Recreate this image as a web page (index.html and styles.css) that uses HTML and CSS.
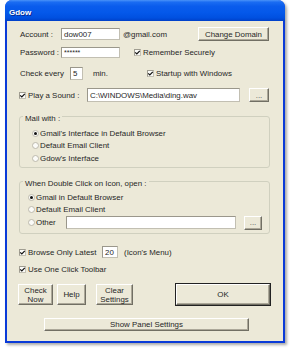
FILE: index.html
```html
<!DOCTYPE html>
<html>
<head>
<meta charset="utf-8">
<link rel="stylesheet" href="styles.css">
</head>
<body>
<div class="win">
  <div class="titlebar"><span class="title">Gdow</span></div>
  <div class="body">
    <div class="row r-account">
      <span class="lbl w42">Account :</span>
      <span class="field f-acc">dow007</span>
      <span class="txt at">@gmail.com</span>
      <span class="btn b-domain">Change Domain</span>
    </div>
    <div class="row r-pass">
      <span class="lbl w42">Password :</span>
      <span class="field f-pass">******</span>
      <span class="chk c-remember"><svg viewBox="0 0 7 7"><polyline points="1.2,3.4 2.8,5 5.8,1.8" /></svg></span>
      <span class="txt ct">Remember Securely</span>
    </div>
    <div class="row r-check">
      <span class="lbl w51">Check every</span>
      <span class="field f-min">5</span>
      <span class="txt min">min.</span>
      <span class="chk"><svg viewBox="0 0 7 7"><polyline points="1.2,3.4 2.8,5 5.8,1.8" /></svg></span>
      <span class="txt ct">Startup with Windows</span>
    </div>
    <div class="row r-sound">
      <span class="chk"><svg viewBox="0 0 7 7"><polyline points="1.2,3.4 2.8,5 5.8,1.8" /></svg></span>
      <span class="txt ct w59">Play a Sound :</span>
      <span class="field f-sound">C:\WINDOWS\Media\ding.wav</span>
      <span class="btn b-dots">...</span>
    </div>

    <div class="group g-mail">
      <span class="legend">Mail with :</span>
      <div class="opt o-mail"><span class="radio on"></span><span class="txt">Gmail's Interface in Default Browser</span></div>
      <div class="opt o-mail"><span class="radio"></span><span class="txt">Default Email Client</span></div>
      <div class="opt o-mail"><span class="radio"></span><span class="txt">Gdow's Interface</span></div>
    </div>

    <div class="group g-dbl">
      <span class="legend">When Double Click on Icon, open :</span>
      <div class="opt o-dbl"><span class="radio on"></span><span class="txt">Gmail in Default Browser</span></div>
      <div class="opt o-dbl"><span class="radio"></span><span class="txt">Default Email Client</span></div>
      <div class="opt o-dbl o-other"><span class="radio"></span><span class="txt w30">Other</span><span class="field f-other"></span><span class="btn b-dots2">...</span></div>
    </div>

    <div class="row r-browse">
      <span class="chk"><svg viewBox="0 0 7 7"><polyline points="1.2,3.4 2.8,5 5.8,1.8" /></svg></span>
      <span class="txt ct w74">Browse Only Latest</span>
      <span class="field f-latest">20</span>
      <span class="txt menu">(Icon's Menu)</span>
    </div>
    <div class="row r-toolbar">
      <span class="chk"><svg viewBox="0 0 7 7"><polyline points="1.2,3.4 2.8,5 5.8,1.8" /></svg></span>
      <span class="txt ct">Use One Click Toolbar</span>
    </div>

    <div class="row r-buttons">
      <span class="btn b-check">Check<br>Now</span>
      <span class="btn b-help">Help</span>
      <span class="btn b-clear">Clear<br>Settings</span>
      <span class="btn b-ok">OK</span>
    </div>
    <div class="row r-panel">
      <span class="btn b-panel">Show Panel Settings</span>
    </div>
  </div>
</div>
</body>
</html>
```

FILE: styles.css
```css
html, body {
  margin: 0;
  padding: 0;
  background: #ffffff;
}
body {
  width: 293px;
  height: 350px;
  overflow: hidden;
  font-family: "Liberation Sans", Arial, sans-serif;
  font-size: 7.9px;
  color: #262626;
}
.win {
  width: 280px;
  height: 343px;
  margin-left: 5px;
  box-sizing: border-box;
  background: #0a3ad8;
  border-radius: 7px 7px 0 0;
  box-shadow: 2px 2px 3px rgba(0, 0, 0, 0.35);
  display: flex;
  flex-direction: column;
  padding: 0 2px 2px 2px;
}
.titlebar {
  height: 21px;
  margin: 0 -2px;
  border-radius: 7px 7px 0 0;
  background: linear-gradient(to bottom, #4a93f8 0%, #1a6cf2 10%, #0a5cec 30%, #0458ea 60%, #0050e0 85%, #0040c8 100%);
  display: flex;
  align-items: center;
  padding-left: 4px;
}
.title {
  color: #fff;
  font-weight: bold;
  font-size: 8px;
  text-shadow: 1px 1px 0 #0a2a90;
  margin-top: 3px;
}
.body {
  flex: 1;
  background: #ece9d8;
  padding-left: 12px;
  display: flex;
  flex-direction: column;
}
.row {
  display: flex;
  align-items: center;
  white-space: nowrap;
}
.txt { white-space: nowrap; line-height: 9px; }
.lbl { padding-left: 1px; box-sizing: border-box; }
.w42 { width: 42px; }
.w51 { width: 51px; }
.w59 { width: 59px; }
.w74 { width: 74px; }
.w30 { width: 30px; }

.field {
  box-sizing: border-box;
  background: #fff;
  border: 1px solid #c2bfb2;
  border-top-color: #9a978b;
  border-left-color: #9a978b;
  padding-left: 2px;
  display: flex;
  align-items: center;
  overflow: hidden;
  white-space: nowrap;
  line-height: 9px;
}
.btn {
  box-sizing: border-box;
  background: #ece9d8;
  border: 1px solid;
  border-color: #ffffff #716f64 #716f64 #ffffff;
  box-shadow: inset -1px -1px 0 #aca899;
  display: flex;
  align-items: center;
  justify-content: center;
  text-align: center;
  line-height: 9px;
  white-space: nowrap;
}
.chk {
  width: 7px;
  height: 7px;
  box-sizing: border-box;
  background: #fbfbf8;
  border: 1px solid #c4c1b4;
  border-top-color: #a09d91;
  border-left-color: #a09d91;
  display: flex;
}
.chk svg {
  width: 7px;
  height: 7px;
  margin: -1px;
}
.chk polyline {
  fill: none;
  stroke: #111;
  stroke-width: 1.2;
}
.ct { margin-left: 2px; }

/* row 1 */
.r-account { margin-top: 6px; height: 14px; }
.f-acc { width: 59px; height: 12px; }
.at { margin-left: 3px; width: 75px; }
.b-domain { width: 71px; height: 14px; }

/* row 2 */
.r-pass { margin-top: 5px; height: 12px; }
.f-pass { width: 59px; height: 11px; font-size: 7px; }
.c-remember { margin-left: 14px; }

/* row 3 */
.r-check { margin-top: 8px; height: 14px; }
.f-min { width: 13px; height: 13px; }
.min { margin-left: 10px; width: 54px; }

/* row 4 */
.r-sound { margin-top: 8px; height: 14px; }
.f-sound { width: 153px; height: 14px; }
.b-dots { margin-left: 9px; width: 20px; height: 14px; color: #555; }

/* groups */
.group {
  position: relative;
  width: 251px;
  box-sizing: border-box;
  border: 1px solid #d0d0bf;
  border-radius: 3px;
  display: flex;
  flex-direction: column;
}
.legend {
  position: absolute;
  left: 3px;
  top: -3px;
  padding: 0 2px;
  background: #ece9d8;
  line-height: 9px;
  white-space: nowrap;
}
.g-mail { margin-top: 14px; height: 52px; padding-top: 10px; }
.g-dbl { margin-top: 13px; height: 53px; padding-top: 9px; }
.opt {
  display: flex;
  align-items: center;
  height: 12.6px;
}
.o-mail { padding-left: 12px; }
.o-dbl { padding-left: 8px; }
.o-other { height: 13px; }
.radio {
  width: 7px;
  height: 7px;
  box-sizing: border-box;
  border-radius: 50%;
  background: #fbfbf8;
  border: 1px solid #bdbaad;
  margin-right: 1px;
  display: flex;
  align-items: center;
  justify-content: center;
}
.radio.on::after {
  content: "";
  width: 3px;
  height: 3px;
  border-radius: 50%;
  background: #111;
}
.f-other { width: 170px; height: 13px; }
.b-dots2 { margin-left: 8px; width: 18px; height: 14px; color: #555; }

/* bottom rows */
.r-browse { margin-top: 11px; height: 14px; }
.f-latest { width: 16px; height: 12px; }
.menu { margin-left: 6px; }
.r-toolbar { margin-top: 4px; height: 12px; }

.r-buttons { margin-top: 9px; height: 21px; }
.r-buttons .btn { height: 21px; }
.b-check { margin-left: -1px; width: 35px; }
.b-help { margin-left: 4px; width: 29px; }
.b-clear { margin-left: 10px; width: 37px; }
.b-ok {
  margin-left: 43px;
  width: 94px;
  outline: 1px solid #222;
  outline-offset: 0;
}
.r-panel { margin-top: 13px; height: 13px; }
.b-panel { margin-left: 25px; width: 205px; height: 13px; }
```
